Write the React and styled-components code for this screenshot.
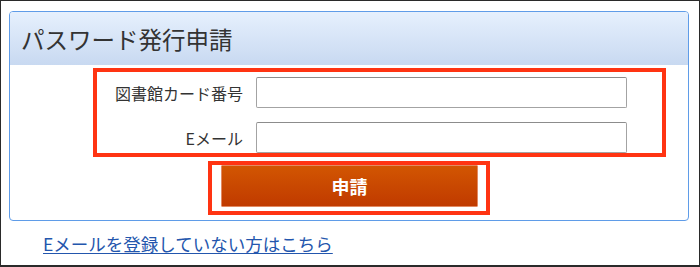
import React from "react";
import styled, { createGlobalStyle } from "styled-components";

const Global = createGlobalStyle`
  html, body { margin: 0; padding: 0; background: #fff; }
  body { font-family: "Noto Sans CJK JP", "Noto Sans", sans-serif; color: #333; }
  * { box-sizing: border-box; }
`;

const Frame = styled.div`
  width: 700px;
  height: 267px;
  border: 1px solid #2a2a2a;
  border-bottom-width: 2px;
  padding: 10px 10px 0 8px;
  display: flex;
  flex-direction: column;
  background: #fff;
`;

const Panel = styled.section`
  width: 680px;
  border: 1px solid #5f9ce8;
  border-radius: 4px;
  overflow: hidden;
  display: flex;
  flex-direction: column;
  padding-bottom: 5px;
`;

const Header = styled.h1`
  margin: 0;
  height: 53px;
  padding: 0 11px;
  display: flex;
  align-items: center;
  font-size: 23.5px;
  font-weight: 400;
  color: #333;
  background: linear-gradient(#e6f0fd, #c8d9f1);
`;

const Body = styled.div`
  display: flex;
  flex-direction: column;
  padding-top: 3px;
`;

const Highlight = styled.div`
  border: 4px solid #ff3412;
`;

const FieldBox = styled(Highlight)`
  margin-left: 83px;
  width: 573px;
  display: grid;
  grid-template-columns: 146px 371px;
  column-gap: 13px;
  row-gap: 14px;
  padding: 5px 0 0 0;
  align-items: center;
`;

const Label = styled.label`
  text-align: right;
  font-size: 16px;
  line-height: 20px;
  color: #333;
`;

const Input = styled.input`
  height: 31px;
  width: 371px;
  border: 1px solid #a3a3a3;
  border-top-color: #8c8c8c;
  border-radius: 2px;
  padding: 0 6px;
  font: inherit;
  background: #fff;
`;

const ButtonBox = styled(Highlight)`
  align-self: center;
  margin-top: 4px;
  width: 282px;
  padding: 0 8px 4px 9px;
`;

const SubmitButton = styled.button`
  display: block;
  width: 257px;
  height: 42px;
  border: 1px solid #e28a62;
  border-radius: 1px;
  background: linear-gradient(#d25602, #c03a00);
  color: #fff;
  font-family: inherit;
  font-size: 18px;
  font-weight: 700;
  cursor: pointer;
`;

const LinkRow = styled.div`
  margin-top: 11px;
  padding-left: 34px;
  line-height: 24px;
`;

const TextLink = styled.a`
  font-size: 17.5px;
  color: #2356ad;
  text-decoration: underline;
  text-underline-offset: 2px;
`;

export default function App() {
  return (
    <>
      <Global />
      <Frame>
        <Panel>
          <Header>パスワード発行申請</Header>
          <Body>
            <FieldBox>
              <Label htmlFor="card">図書館カード番号</Label>
              <Input id="card" type="text" />
              <Label htmlFor="mail">Eメール</Label>
              <Input id="mail" type="text" />
            </FieldBox>
            <ButtonBox>
              <SubmitButton type="button">申請</SubmitButton>
            </ButtonBox>
          </Body>
        </Panel>
        <LinkRow>
          <TextLink href="#">Eメールを登録していない方はこちら</TextLink>
        </LinkRow>
      </Frame>
    </>
  );
}
